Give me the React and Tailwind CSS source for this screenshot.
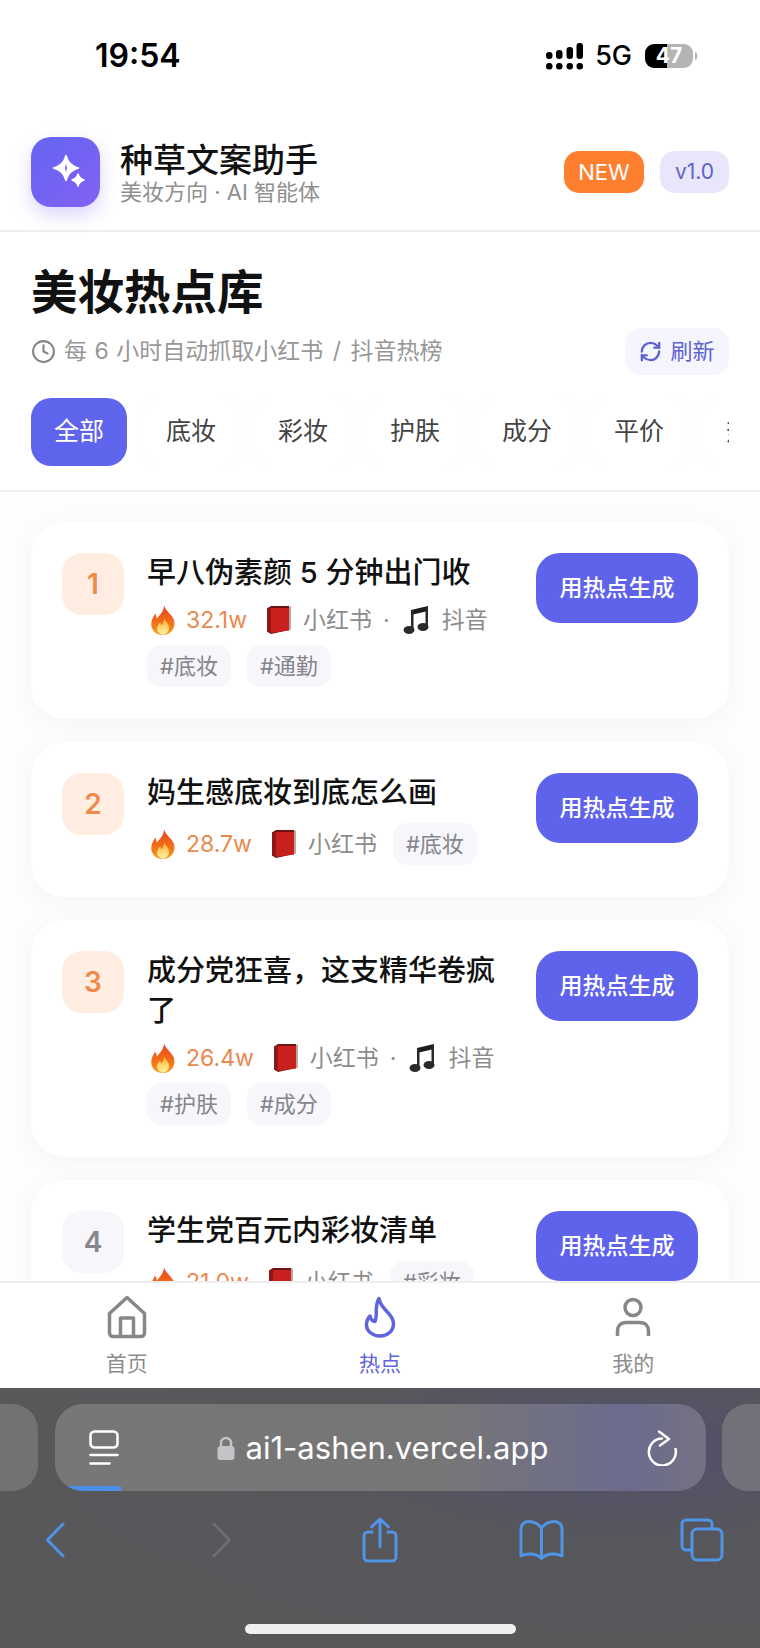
import React from "react";
import { Clock, RefreshCw } from "lucide-react";

const tabs = ["全部", "底妆", "彩妆", "护肤", "成分", "平价", "热门"];

const hotItems = [
  { rank: 1, title: "早八伪素颜 5 分钟出门收", heat: "32.1w", douyin: true, tags: ["#底妆", "#通勤"] },
  { rank: 2, title: "妈生感底妆到底怎么画", heat: "28.7w", douyin: false, tags: ["#底妆"] },
  { rank: 3, title: "成分党狂喜，这支精华卷疯了", heat: "26.4w", douyin: true, tags: ["#护肤", "#成分"] },
  { rank: 4, title: "学生党百元内彩妆清单", heat: "21.0w", douyin: false, tags: ["#彩妆"] },
];

const FireEmoji = () => (
  <svg width="30" height="32" viewBox="0 0 30 32" className="shrink-0">
    <defs>
      <linearGradient id="fireOuter" x1="0" y1="0" x2="0" y2="1">
        <stop offset="0" stopColor="#e8401c" />
        <stop offset="0.7" stopColor="#f47a1c" />
        <stop offset="1" stopColor="#f9a11f" />
      </linearGradient>
      <linearGradient id="fireInner" x1="0" y1="0" x2="0" y2="1">
        <stop offset="0" stopColor="#fbb024" />
        <stop offset="1" stopColor="#fff2a8" />
      </linearGradient>
    </defs>
    <path d="M16 1c1 6 8 9 10 15 2 8-3 15-11 15S2 25 3.500 17.500c.7-3.500 2.500-5 3.500-8 1 1.500 1.700 3 1.700 5C12 11 16 7 16 1z" fill="url(#fireOuter)" />
    <path d="M16 14c.5 3 5 5 5 10 0 4-3 6.500-6 6.500s-6-2.500-6-6c0-3 2-4 3-6 .7 1 1 2 1 3 2-1.500 3-4 3-7.500z" fill="url(#fireInner)" />
  </svg>
);

const BookEmoji = () => (
  <svg width="28" height="30" viewBox="0 0 28 30" className="shrink-0">
    <path d="M3 3.500 7 1h18v24l-18 4-4-2.500z" fill="#6e1410" />
    <path d="M7 3h18v22.500L7 28z" fill="#c8201f" />
    <path d="M3 3.500 7 3v25l-4-1.500z" fill="#8f1715" />
    <path d="M25 1.500h2v23l-2 .8z" fill="#b9a99a" />
  </svg>
);

const MusicEmoji = () => (
  <svg width="28" height="30" viewBox="0 0 28 30" className="shrink-0">
    <path d="M8 5 25 1v5L10 9.500z" fill="#1d1d1f" />
    <path d="M8 5h2.500v19H8zM22.500 2H25v19h-2.500z" fill="#2a2a2c" />
    <ellipse cx="6" cy="25" rx="5.500" ry="4" fill="#2a2a2c" />
    <ellipse cx="20" cy="22" rx="5.500" ry="4" fill="#2a2a2c" />
  </svg>
);

const Star = ({ cx, cy, r, k }) => (
  <path
    d={`M${cx} ${cy - r}Q${cx + k} ${cy - k} ${cx + r} ${cy}Q${cx + k} ${cy + k} ${cx} ${cy + r}Q${cx - k} ${cy + k} ${cx - r} ${cy}Q${cx - k} ${cy - k} ${cx} ${cy - r}Z`}
    fill="#fff"
    stroke="#fff"
    strokeWidth="1.500"
    strokeLinejoin="round"
  />
);

const SparkleLogo = () => (
  <svg width="40" height="40" viewBox="0 0 40 40">
    <Star cx={20} cy={16} r={12.5} k={2.5} />
    <path d="M20 11.500 21 16l-1 4.500-1-4.500z" fill="#7c63f3" />
    <Star cx={32} cy={28} r={6} k={1.5} />
  </svg>
);

const SignalIcon = () => (
  <svg width="38" height="28" viewBox="0 0 38 28" fill="#000">
    <rect x="1" y="10" width="6.500" height="7" rx="3" />
    <rect x="11" y="8" width="6.500" height="9" rx="3" />
    <rect x="21.500" y="5" width="6.500" height="12" rx="3" />
    <rect x="31.500" y="1" width="6.500" height="16" rx="3" />
    <rect x="1" y="21" width="6.500" height="6.500" rx="3" />
    <rect x="11" y="21" width="6.500" height="6.500" rx="3" />
    <rect x="21.500" y="21" width="6.500" height="6.500" rx="3" />
    <rect x="31.500" y="21" width="6.500" height="6.500" rx="3" />
  </svg>
);

const HomeIcon = () => (
  <svg width="40" height="44" viewBox="0 0 40 44" fill="none" stroke="#87878a" strokeWidth="3.500" strokeLinejoin="round">
    <path d="M2.500 18.500 20 2.500l17.500 16V38a3.500 3.500 0 0 1-3.500 3.500H6A3.500 3.500 0 0 1 2.500 38z" />
    <path d="M13.500 41V23h13v18" />
  </svg>
);

const FlameIcon = () => (
  <svg width="32" height="42" viewBox="0 0 32 42" fill="none" stroke="#5f63dc" strokeWidth="3.500" strokeLinejoin="round" strokeLinecap="round">
    <path d="M15 2.500c1 6 3.500 8 7 12 4 4 7.500 8 7.500 13 0 7.500-6 12.500-13.500 12.500S2.500 35 2.500 29c0-4 1.500-7 3.500-9 .5 3 2 5 5 5.500C14 19 10 10 15 2.500z" />
  </svg>
);

const PersonIcon = () => (
  <svg width="38" height="40" viewBox="0 0 38 40" fill="none" stroke="#87878a" strokeWidth="3.500">
    <circle cx="19" cy="10.500" r="8" />
    <path d="M3.500 39v-5c0-5 3-8.500 8.500-8.500h14c5.500 0 8.500 3.500 8.500 8.500v5" />
  </svg>
);

const TabsIcon = () => (
  <svg width="30" height="36" viewBox="0 0 30 36" fill="none" stroke="#fff" strokeWidth="2.500" strokeLinecap="round">
    <rect x="1.500" y="1.500" width="27" height="16" rx="4" />
    <path d="M1.500 25h27M1.500 33.500h19" />
  </svg>
);

const ReloadIcon = () => (
  <svg width="32" height="36" viewBox="0 0 32 36" fill="none" stroke="#fff" strokeWidth="2.500" strokeLinecap="round" strokeLinejoin="round">
    <path d="M15 8.500A13.500 13.500 0 1 0 28.500 19" />
    <path d="M12 1.500 22 9l-9 6.500" />
  </svg>
);

const BackIcon = ({ color }) => (
  <svg width="20" height="36" viewBox="0 0 20 36" fill="none" stroke={color} strokeWidth="3" strokeLinecap="round" strokeLinejoin="round">
    <path d="M18 2 2.500 18 18 34" />
  </svg>
);

const ForwardIcon = ({ color }) => (
  <svg width="20" height="36" viewBox="0 0 20 36" fill="none" stroke={color} strokeWidth="3" strokeLinecap="round" strokeLinejoin="round">
    <path d="M2 2l15.500 16L2 34" />
  </svg>
);

const ShareIcon = () => (
  <svg width="36" height="46" viewBox="0 0 36 46" fill="none" stroke="#4f94e6" strokeWidth="3" strokeLinecap="round" strokeLinejoin="round">
    <path d="M10 15H6a4 4 0 0 0-4 4v21a4 4 0 0 0 4 4h24a4 4 0 0 0 4-4V19a4 4 0 0 0-4-4h-4" />
    <path d="M18 30V2M9.500 10 18 2l8.500 8" />
  </svg>
);

const BookIcon = () => (
  <svg width="47" height="40" viewBox="0 0 47 40" fill="none" stroke="#4f94e6" strokeWidth="3" strokeLinecap="round" strokeLinejoin="round">
    <path d="M23.500 8C20 3 15 1.500 10 1.500 6 1.500 3 5 3 9v27c6-3 15-3 20.500 2.500C29 33 38 33 44 36V9c0-4-3-7.500-7-7.500-5 0-10 1.500-13.500 6.500z" />
    <path d="M23.500 8v30" />
  </svg>
);

const CopyTabsIcon = () => (
  <svg width="44" height="44" viewBox="0 0 44 44" fill="none" stroke="#4f94e6" strokeWidth="3" strokeLinejoin="round">
    <path d="M12 32H6a4 4 0 0 1-4-4V6a4 4 0 0 1 4-4h22a4 4 0 0 1 4 4v5" />
    <rect x="12" y="11" width="30" height="31" rx="5" />
  </svg>
);

const HotCard = ({ item }) => {
  const top = item.rank <= 3;
  return (
    <div className="flex shrink-0 items-start rounded-[34px] bg-white pt-[31px] pr-[31px] pb-[32px] pl-[31px] shadow-[0_4px_24px_rgba(30,30,80,0.04)]">
      <div
        className={`flex h-[62px] w-[62px] shrink-0 items-center justify-center rounded-[20px] text-[28px] font-semibold ${
          top ? "bg-[#ffede2] text-[#f08a4b]" : "bg-[#f6f6fb] text-[#86868c]"
        }`}
      >
        {item.rank}
      </div>
      <div className="ml-[23px] min-w-0 flex-1">
        <div className="text-[29px] leading-[40px] font-medium text-[#111]">{item.title}</div>
        <div className="mt-[10px] flex flex-wrap items-center gap-x-[16px] gap-y-2">
          <div className="flex h-[34px] items-center text-[23px] text-[#8c8c8c]">
            <span className="ml-[1px]"><FireEmoji /></span>
            <span className="ml-[8px] text-[#e8894f]">{item.heat}</span>
            <span className="ml-[17px]"><BookEmoji /></span>
            <span className="ml-[11px]">小红书</span>
            {item.douyin && (
              <>
                <span className="ml-[11px]">·</span>
                <span className="ml-[13px]"><MusicEmoji /></span>
                <span className="ml-[11px]">抖音</span>
              </>
            )}
          </div>
          {item.tags.map((tag) => (
            <span key={tag} className="flex h-[42px] items-center rounded-[14px] bg-[#f6f6fb] px-[13px] text-[22px] text-[#85858c]">
              {tag}
            </span>
          ))}
        </div>
      </div>
      <button className="ml-[24px] flex h-[70px] w-[162px] shrink-0 items-center justify-center rounded-[24px] bg-[#5f63ec] text-[23px] font-medium text-white">
        用热点生成
      </button>
    </div>
  );
};

const NavItem = ({ icon, label, active }) => (
  <div className="flex flex-col items-center">
    <div className="flex h-[44px] items-center justify-center">{icon}</div>
    <span className={`mt-[10px] text-[21px] leading-[30px] ${active ? "text-[#5f63dc]" : "text-[#8c8c8c]"}`}>{label}</span>
  </div>
);

export default function App() {
  return (
    <div className="flex h-[1648px] w-[760px] flex-col overflow-hidden bg-white font-['Inter','Noto_Sans_CJK_SC',sans-serif]">
      {/* status bar */}
      <div className="flex h-[115px] shrink-0 items-start justify-between pt-[38px] pr-[63px] pl-[95px]">
        <span className="text-[32px] leading-[36px] font-semibold text-black">19:54</span>
        <div className="flex items-center">
          <SignalIcon />
          <span className="ml-[12px] text-[27px] leading-[36px] font-medium text-black">5G</span>
          <div className="ml-[13px] flex h-[24px] w-[48px] items-center justify-center rounded-[9px] bg-[linear-gradient(90deg,#000_46%,#b4b4b4_46%)] text-[21px] font-bold text-white">
            47
          </div>
          <div className="ml-[2px] h-[8px] w-[2px] rounded-r-full bg-[#b4b4b4]" />
        </div>
      </div>

      {/* header */}
      <div className="flex shrink-0 items-center justify-between border-b-2 border-[#eeeeee] pt-[22px] pr-[31px] pb-[23px] pl-[31px]">
        <div className="flex items-center gap-5">
          <div className="flex h-[70px] w-[69px] items-center justify-center rounded-[20px] bg-[linear-gradient(135deg,#6366f1,#8360f5)] shadow-[0_8px_18px_rgba(110,90,240,0.25)]">
            <SparkleLogo />
          </div>
          <div>
            <div className="text-[33px] leading-[40px] font-medium text-[#111]">种草文案助手</div>
            <div className="text-[22px] leading-[24px] text-[#8f8f8f]">美妆方向 · AI 智能体</div>
          </div>
        </div>
        <div className="flex items-center gap-4">
          <span className="flex h-[42px] w-[80px] items-center justify-center rounded-[15px] bg-[#ff7f30] text-[22px] text-white">NEW</span>
          <span className="flex h-[42px] w-[69px] items-center justify-center rounded-[15px] bg-[#e8e6fa] text-[21px] text-[#5f63c8]">v1.0</span>
        </div>
      </div>

      {/* section head */}
      <div className="shrink-0 border-b-2 border-[#eeeeee] pt-[30px] pb-[24px] pl-[31px]">
        <h1 className="text-[46.500px] leading-[60px] font-bold text-[#111]">美妆热点库</h1>
        <div className="mt-[6px] flex items-center justify-between pr-[31px]">
          <div className="flex items-center gap-2 text-[23px] text-[#979797]">
            <Clock size={25} strokeWidth={2} className="text-[#858585]" />
            <span className="[word-spacing:1px]">
              每 6 小时自动抓取小红书<span className="[word-spacing:3px]"> / 抖音热榜</span>
            </span>
          </div>
          <button className="flex h-[47px] w-[104px] items-center justify-center gap-2 rounded-[16px] bg-[#f5f5fd] text-[22px] text-[#5f63d0]">
            <RefreshCw size={23} strokeWidth={2.5} />
            <span>刷新</span>
          </button>
        </div>
        <div className="mt-[23px] mr-[31px] flex gap-4 overflow-hidden">
          {tabs.map((tab, i) => (
            <div
              key={tab}
              className={`flex h-[68px] w-[96px] shrink-0 items-center justify-center rounded-[20px] text-[25px] ${
                i === 0
                  ? "bg-[#5f64ec] text-white"
                  : "bg-white text-[#444] shadow-[0_0_12px_rgba(0,0,0,0.018)]"
              }`}
            >
              {tab}
            </div>
          ))}
        </div>
      </div>

      {/* hot list */}
      <div className="flex min-h-0 flex-1 flex-col gap-[23px] overflow-hidden bg-[#fdfdfe] px-[31px] pt-[30px]">
        {hotItems.map((item) => (
          <HotCard key={item.rank} item={item} />
        ))}
      </div>

      {/* bottom nav */}
      <div className="grid h-[107px] shrink-0 grid-cols-3 border-t-2 border-[#eeeeee] bg-white pt-[12px]">
        <NavItem icon={<HomeIcon />} label="首页" />
        <NavItem icon={<FlameIcon />} label="热点" active />
        <NavItem icon={<PersonIcon />} label="我的" />
      </div>

      {/* safari chrome */}
      <div className="flex h-[260px] shrink-0 flex-col bg-[radial-gradient(ellipse_at_82%_24%,#524f6c_0%,#57575b_34%,#59595b_100%)] pt-[16px]">
        <div className="flex h-[87px] items-stretch justify-between">
          <div className="w-[38px] rounded-r-[26px] bg-[#727273]" />
          <div className="relative flex w-[651px] items-center overflow-hidden rounded-[28px] bg-[linear-gradient(90deg,#777778_0%,#767677_60%,#6c6b8e_88%,#737282_100%)] pr-[27px] pl-[34px]">
            <TabsIcon />
            <div className="flex flex-1 items-center justify-center gap-[11px]">
              <svg width="18" height="24" viewBox="0 0 18 24" fill="none">
                <path d="M4 11V7a5 5 0 0 1 10 0v4" stroke="#c4c4c8" strokeWidth="2.500" />
                <rect x="0.500" y="10" width="17" height="14" rx="3" fill="#c4c4c8" />
              </svg>
              <span className="text-[31px] leading-[40px] text-white">ai1-ashen.vercel.app</span>
            </div>
            <ReloadIcon />
            <div className="absolute bottom-0 left-0 h-[5px] w-[66px] bg-[#4a90e8]" />
          </div>
          <div className="w-[38px] rounded-l-[26px] bg-[#71717a]" />
        </div>
        <div className="mt-[26px] flex items-center pl-[45px]">
          <BackIcon color="#4f94e6" />
          <span className="ml-[147px] flex"><ForwardIcon color="#6e6e70" /></span>
          <span className="ml-[130px] flex"><ShareIcon /></span>
          <span className="ml-[120px] flex"><BookIcon /></span>
          <span className="ml-[115px] flex"><CopyTabsIcon /></span>
        </div>
        <div className="mt-[61px] h-[10px] w-[271px] self-center rounded-full bg-[#f0f0f0]" />
      </div>
    </div>
  );
}
